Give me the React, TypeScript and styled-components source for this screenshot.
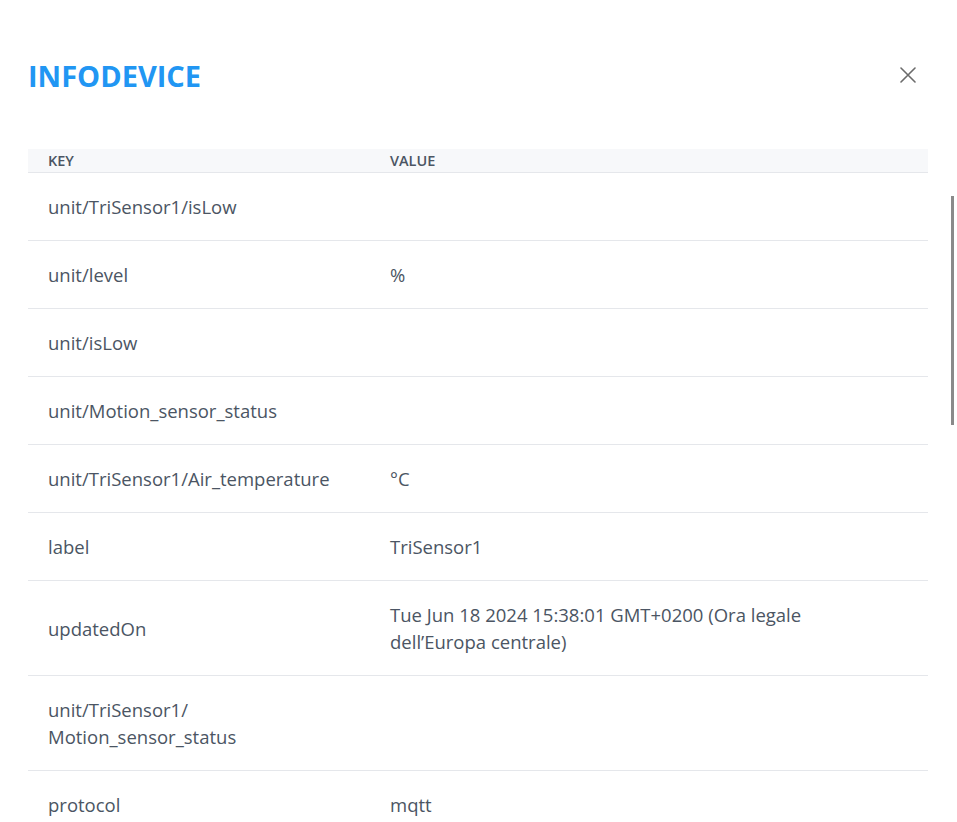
import React from 'react'
import styled, { createGlobalStyle } from 'styled-components'

const GlobalStyle = createGlobalStyle`
  html, body {
    margin: 0;
    padding: 0;
    background: #fff;
    font-family: "Open Sans", "Noto Sans", sans-serif;
  }
`

const rows: { k: string, v: string }[] = [
  { k: 'unit/TriSensor1/isLow', v: '' },
  { k: 'unit/level', v: '%' },
  { k: 'unit/isLow', v: '' },
  { k: 'unit/Motion_sensor_status', v: '' },
  { k: 'unit/TriSensor1/Air_temperature', v: '°C' },
  { k: 'label', v: 'TriSensor1' },
  { k: 'updatedOn', v: 'Tue Jun 18 2024 15:38:01 GMT+0200 (Ora legale dell\u2019Europa centrale)' },
  { k: 'unit/TriSensor1/Motion_sensor_status', v: '' },
  { k: 'protocol', v: 'mqtt' },
]

// allow line breaks after each slash, like a path
const breakable = (s: string) => {
  const parts = s.split('/')
  return parts.map((p, i) =>
    <React.Fragment key={i}>{p}{i < parts.length - 1 && <>/<wbr /></>}</React.Fragment>
  )
}

export default function App() {
  return <Page>
    <GlobalStyle />
    <Modal>
      <Header>
        <Title>INFODEVICE</Title>
        <CloseBtn aria-label="close">
          <svg width="16" height="16" viewBox="0 0 16 16">
            <path d="M1 1L15 15M15 1L1 15" stroke="#6b6b6b" strokeWidth="1.6" strokeLinecap="round" />
          </svg>
        </CloseBtn>
      </Header>
      <Table>
        <colgroup>
          <col style={{ width: 342 }} />
          <col style={{ width: 500 }} />
          <col />
        </colgroup>
        <thead>
          <tr>
            <Th>Key</Th>
            <Th>Value</Th>
            <Th />
          </tr>
        </thead>
        <tbody>
          {rows.map(r =>
            <tr key={r.k}>
              <Td>{breakable(r.k)}</Td>
              <Td>{r.v}</Td>
              <Td />
            </tr>
          )}
        </tbody>
      </Table>
    </Modal>
    <ScrollThumb />
  </Page>
}

const Page = styled.div`
  position: relative;
  height: 822px;
  overflow: hidden;
`
const Modal = styled.div`
  padding: 46px 29px 0 28px;
`
const Header = styled.div`
  display: flex;
  align-items: center;
  justify-content: space-between;
  height: 58px;
  margin-bottom: 45px;
`
const Title = styled.h2`
  margin: 0;
  font-size: 29px;
  font-weight: 700;
  color: #2196f3;
  letter-spacing: 0;
`
const CloseBtn = styled.button`
  border: none;
  background: none;
  padding: 0;
  margin-right: 12px;
  width: 16px;
  height: 16px;
  display: flex;
  cursor: pointer;
`
const Table = styled.table`
  width: 900px;
  border-collapse: collapse;
  table-layout: fixed;
`
const Th = styled.th`
  background: #f7f8fa;
  border-bottom: 1px solid #e5e7eb;
  text-align: left;
  text-transform: uppercase;
  font-size: 14.5px;
  font-weight: 600;
  color: #4b5563;
  padding: 3px 20px 3px;
  line-height: 17px;
`
const Td = styled.td`
  border-bottom: 1px solid #e5e7eb;
  padding: 20px;
  font-size: 18.5px;
  line-height: 27px;
  color: #4b5563;
  vertical-align: middle;
  overflow-wrap: break-word;
`
const ScrollThumb = styled.div`
  position: absolute;
  top: 196px;
  right: 3px;
  width: 3px;
  height: 229px;
  background: #8a8a8a;
`
